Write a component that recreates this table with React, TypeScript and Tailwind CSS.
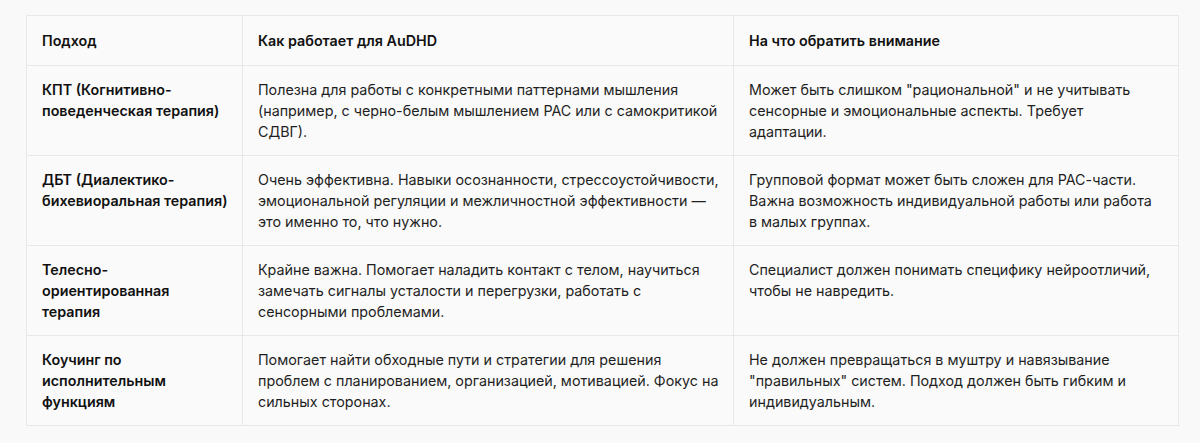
const rows = [
  {
    name: "КПТ (Когнитивно-поведенческая терапия)",
    how: "Полезна для работы с конкретными паттернами мышления (например, с черно-белым мышлением РАС или с самокритикой СДВГ).",
    note: "Может быть слишком \"рациональной\" и не учитывать сенсорные и эмоциональные аспекты. Требует адаптации.",
  },
  {
    name: "ДБТ (Диалектико-бихевиоральная терапия)",
    how: "Очень эффективна. Навыки осознанности, стрессоустойчивости, эмоциональной регуляции и межличностной эффективности — это именно то, что нужно.",
    note: "Групповой формат может быть сложен для РАС-части. Важна возможность индивидуальной работы или работа в малых группах.",
  },
  {
    name: "Телесно-ориентированная терапия",
    how: "Крайне важна. Помогает наладить контакт с телом, научиться замечать сигналы усталости и перегрузки, работать с сенсорными проблемами.",
    note: "Специалист должен понимать специфику нейроотличий, чтобы не навредить.",
  },
  {
    name: "Коучинг по исполнительным функциям",
    how: "Помогает найти обходные пути и стратегии для решения проблем с планированием, организацией, мотивацией. Фокус на сильных сторонах.",
    note: "Не должен превращаться в муштру и навязывание \"правильных\" систем. Подход должен быть гибким и индивидуальным.",
  },
];

export default function App() {
  return (
    <div className="min-h-[443px] bg-[#f9f9f9] pt-[15px] pl-[26px] font-['Inter','Noto_Sans',sans-serif] text-[14.3px] leading-[21px] text-[#1f1f1f]">
      <table className="w-[1152px] table-fixed border-collapse border border-[#e8e8e8] bg-[#fafafa]">
        <colgroup>
          <col className="w-[216px]" />
          <col className="w-[491px]" />
          <col className="w-[445px]" />
        </colgroup>
        <thead>
          <tr className="h-[50px] text-left text-[#111]">
            <th className="border border-[#e8e8e8] pl-[15px] pr-[12px] font-semibold">Подход</th>
            <th className="border border-[#e8e8e8] pl-[15px] pr-[12px] font-semibold">Как работает для AuDHD</th>
            <th className="border border-[#e8e8e8] pl-[15px] pr-[16px] font-semibold">На что обратить внимание</th>
          </tr>
        </thead>
        <tbody>
          {rows.map((r) => (
            <tr key={r.name} className="h-[90px] align-top">
              <td className="border border-[#e8e8e8] pl-[15px] pr-[12px] pt-[13px] font-semibold text-[#111]">{r.name}</td>
              <td className="border border-[#e8e8e8] pl-[15px] pr-[12px] pt-[13px]">{r.how}</td>
              <td className="border border-[#e8e8e8] pl-[15px] pr-[16px] pt-[13px]">{r.note}</td>
            </tr>
          ))}
        </tbody>
      </table>
    </div>
  );
}
